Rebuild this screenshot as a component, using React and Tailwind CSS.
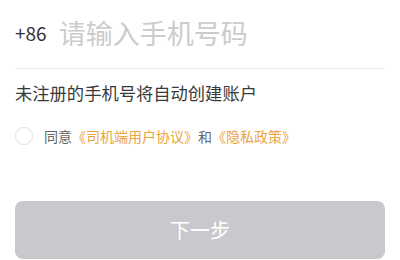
import { useState } from 'react'

const FONT = "font-['Noto_Sans_CJK_SC','Noto_Sans',sans-serif]"

export default function App() {
  const [agreed, setAgreed] = useState(false)
  const [phone, setPhone] = useState('')

  return (
    <div className={`w-[400px] h-[260px] bg-white px-[15px] overflow-hidden ${FONT}`}>
      {/* Phone input */}
      <div className="flex items-center h-[69px] pb-[4px] border-b border-[#eeeeee]">
        <span className="text-[19px] text-[#333333] leading-none">+86</span>
        <input
          value={phone}
          onChange={e => setPhone(e.target.value)}
          placeholder="请输入手机号码"
          className="ml-[12px] flex-1 min-w-0 text-[27px] leading-none text-[#333333] placeholder:text-[#cccccc] outline-none bg-transparent"
        />
      </div>

      <p className="mt-[12px] text-[17.3px] leading-[24px] text-[#3a3a3a]">未注册的手机号将自动创建账户</p>

      {/* Agreement */}
      <div className="mt-[21px] flex items-center h-[20px]">
        <button
          onClick={() => setAgreed(!agreed)}
          className={`w-[18px] h-[18px] rounded-full border ${agreed ? 'border-[#f0a53c] bg-[#f0a53c]' : 'border-[#dddddd]'}`}
          aria-label="同意协议"
        />
        <span className="ml-[11px] text-[14px] leading-[20px] text-[#666666]">
          同意<span className="text-[#eba43f]">《司机端用户协议》</span>和<span className="text-[#eba43f]">《隐私政策》</span>
        </span>
      </div>

      <button className="mt-[55px] w-full h-[58px] rounded-[8px] bg-[#c8c9cc] text-white text-[20px] flex items-center justify-center">
        下一步
      </button>
    </div>
  )
}
